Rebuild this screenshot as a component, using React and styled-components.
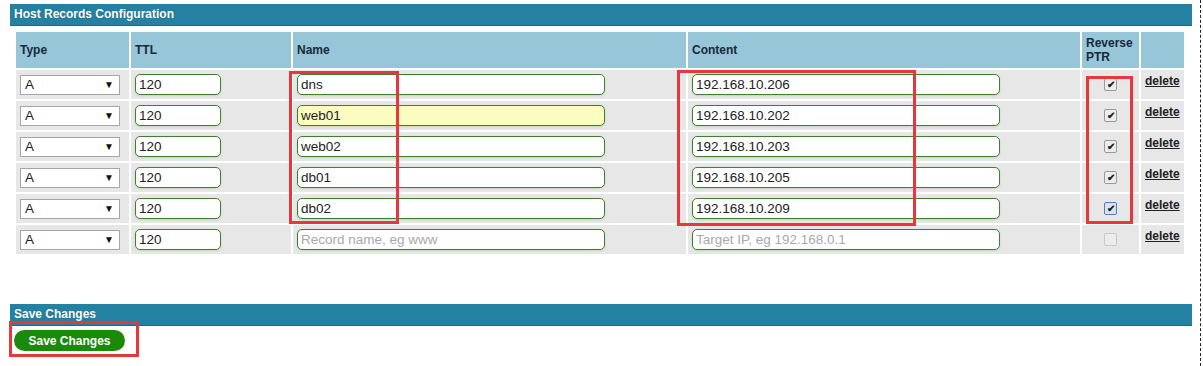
import styled, { createGlobalStyle } from "styled-components";

const records = [
  { name: "dns", ip: "192.168.10.206", ptr: "on" },
  { name: "web01", ip: "192.168.10.202", ptr: "on", hl: true },
  { name: "web02", ip: "192.168.10.203", ptr: "on" },
  { name: "db01", ip: "192.168.10.205", ptr: "on" },
  { name: "db02", ip: "192.168.10.209", ptr: "focus" },
  { name: "", ip: "", ptr: "off" },
];

const GlobalStyle = createGlobalStyle`
  body {
    margin: 0;
    background: #fff;
    font-family: "Liberation Sans", Arial, sans-serif;
  }
`;

function App() {
  return (
    <Page>
      <GlobalStyle />
      <Section>
        <Bar>Host Records Configuration</Bar>
        <Grid>
          <Head>Type</Head>
          <Head>TTL</Head>
          <Head>Name</Head>
          <Head>Content</Head>
          <Head>
            Reverse
            <br />
            PTR
          </Head>
          <Head />
          {records.map((r, i) => (
            <Row key={i}>
              <Cell>
                <Select>
                  A<Arrow>▼</Arrow>
                </Select>
              </Cell>
              <Cell>
                <Field $w={86}>120</Field>
              </Cell>
              <Cell>
                <Field $w={308} $hl={r.hl} $ph={!r.name}>
                  {r.name || "Record name, eg www"}
                </Field>
              </Cell>
              <Cell>
                <Field $w={308} $ph={!r.ip}>
                  {r.ip || "Target IP, eg 192.168.0.1"}
                </Field>
              </Cell>
              <Cell $center>
                <Check $state={r.ptr}>{r.ptr !== "off" ? "✔" : ""}</Check>
              </Cell>
              <Cell>
                <Delete>delete</Delete>
              </Cell>
            </Row>
          ))}
        </Grid>
        <Mark $l={289} $t={71} $w={110} $h={153} />
        <Mark $l={677} $t={70} $w={239} $h={156} />
        <Mark $l={1086} $t={76} $w={47} $h={148} />
      </Section>
      <Section>
        <Bar>Save Changes</Bar>
        <ButtonRow>
          <SaveButton>Save Changes</SaveButton>
        </ButtonRow>
        <Mark $l={9} $t={321} $w={130} $h={36} />
      </Section>
    </Page>
  );
}

const Page = styled.div`
  width: 1201px;
  height: 366px;
  padding: 4px 8px 0 10px;
  box-sizing: border-box;
  border-right: 1px dashed #222;
  display: flex;
  flex-direction: column;
  gap: 50px;
`;

const Section = styled.div`
  width: 1182px;
`;

const Bar = styled.div`
  height: 21px;
  background: #2581a1;
  border-bottom: 1px solid #1e6a85;
  color: #fff;
  font-weight: bold;
  font-size: 12px;
  line-height: 21px;
  padding-left: 4px;
  text-shadow: 0 0 1px rgba(0, 0, 0, 0.3);
`;

const Grid = styled.div`
  margin: 4px 0 0 6px;
  display: grid;
  grid-template-columns: 113px 160px 393px 392px 57px 43px;
  grid-auto-rows: 29px;
  grid-template-rows: 36px;
  gap: 2px;
  padding-top: 2px;
`;

const Head = styled.div`
  background: #98c6d9;
  color: #17293a;
  font-weight: bold;
  font-size: 12px;
  line-height: 14px;
  padding: 0 4px;
  display: flex;
  align-items: center;
`;

const Row = styled.div`
  display: contents;
`;

const Cell = styled.div`
  background: #e7e7e7;
  display: flex;
  align-items: center;
  justify-content: ${(p) => (p.$center ? "center" : "flex-start")};
  padding: 0 4px;
`;

const Select = styled.div`
  width: 100px;
  height: 20px;
  box-sizing: border-box;
  border: 1px solid #a6a6a6;
  background: #fff;
  font-size: 13.5px;
  color: #222;
  padding: 0 4px;
  display: flex;
  align-items: center;
  justify-content: space-between;
`;

const Arrow = styled.span`
  font-size: 10px;
  color: #111;
  margin-right: 1px;
`;

const Field = styled.div`
  width: ${(p) => p.$w}px;
  height: 21px;
  box-sizing: border-box;
  border: 1px solid #3f7f2f;
  border-radius: 5px;
  background: ${(p) => (p.$hl ? "#fbfdc0" : "#fff")};
  box-shadow: 0 1px 2px rgba(90, 170, 70, 0.25);
  font-size: 13.5px;
  line-height: 19px;
  padding-left: 3px;
  color: ${(p) => (p.$ph ? "#a9a9a9" : "#222")};
  white-space: nowrap;
  overflow: hidden;
`;

const Check = styled.span`
  width: 11px;
  height: 11px;
  border: 1px solid
    ${(p) => (p.$state === "focus" ? "#4f7fc0" : p.$state === "off" ? "#c8c8c8" : "#9a9a9a")};
  background: ${(p) => (p.$state === "focus" ? "#d7e4f7" : p.$state === "off" ? "#ededed" : "#ececec")};
  border-radius: 2px;
  font-size: 10px;
  font-weight: bold;
  line-height: 11px;
  text-align: center;
  color: #222;
`;

const Delete = styled.a`
  font-size: 12px;
  font-weight: bold;
  color: #222;
  text-decoration: underline;
  margin-top: -8px;
`;

const ButtonRow = styled.div`
  padding: 4px 0 0 4px;
`;

const SaveButton = styled.button`
  width: 111px;
  height: 21px;
  border: none;
  border-radius: 11px;
  background: #1a8a0b;
  color: #fff;
  font-family: "Liberation Sans", Arial, sans-serif;
  font-weight: bold;
  font-size: 12px;
  padding: 0;
`;

const Mark = styled.div`
  position: absolute;
  left: ${(p) => p.$l}px;
  top: ${(p) => p.$t}px;
  width: ${(p) => p.$w}px;
  height: ${(p) => p.$h}px;
  box-sizing: border-box;
  border: 3px solid #e6373c;
  pointer-events: none;
`;

export default App;
